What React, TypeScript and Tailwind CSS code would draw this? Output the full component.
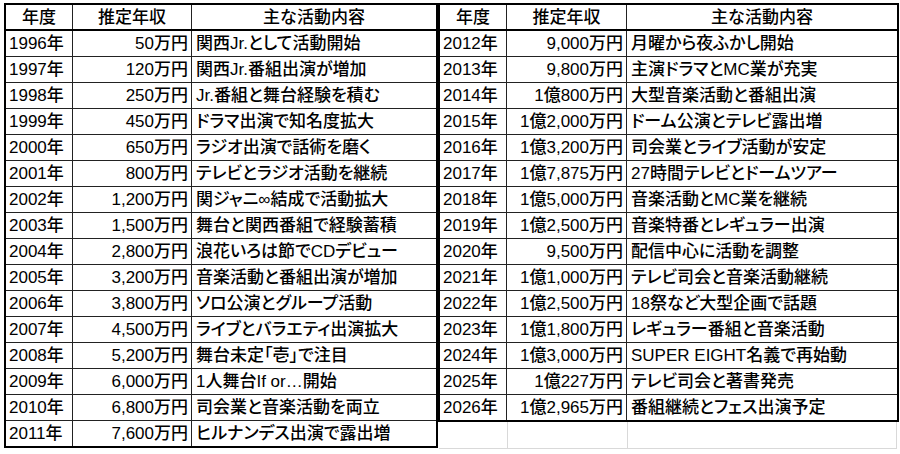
const leftRows: [string, string, string][] = [
  ["1996年", "50万円", "関西Jr.として活動開始"],
  ["1997年", "120万円", "関西Jr.番組出演が増加"],
  ["1998年", "250万円", "Jr.番組と舞台経験を積む"],
  ["1999年", "450万円", "ドラマ出演で知名度拡大"],
  ["2000年", "650万円", "ラジオ出演で話術を磨く"],
  ["2001年", "800万円", "テレビとラジオ活動を継続"],
  ["2002年", "1,200万円", "関ジャニ∞結成で活動拡大"],
  ["2003年", "1,500万円", "舞台と関西番組で経験蓄積"],
  ["2004年", "2,800万円", "浪花いろは節でCDデビュー"],
  ["2005年", "3,200万円", "音楽活動と番組出演が増加"],
  ["2006年", "3,800万円", "ソロ公演とグループ活動"],
  ["2007年", "4,500万円", "ライブとバラエティ出演拡大"],
  ["2008年", "5,200万円", "舞台未定「壱」で注目"],
  ["2009年", "6,000万円", "1人舞台If or…開始"],
  ["2010年", "6,800万円", "司会業と音楽活動を両立"],
  ["2011年", "7,600万円", "ヒルナンデス出演で露出増"],
];

const rightRows: [string, string, string][] = [
  ["2012年", "9,000万円", "月曜から夜ふかし開始"],
  ["2013年", "9,800万円", "主演ドラマとMC業が充実"],
  ["2014年", "1億800万円", "大型音楽活動と番組出演"],
  ["2015年", "1億2,000万円", "ドーム公演とテレビ露出増"],
  ["2016年", "1億3,200万円", "司会業とライブ活動が安定"],
  ["2017年", "1億7,875万円", "27時間テレビとドームツアー"],
  ["2018年", "1億5,000万円", "音楽活動とMC業を継続"],
  ["2019年", "1億2,500万円", "音楽特番とレギュラー出演"],
  ["2020年", "9,500万円", "配信中心に活動を調整"],
  ["2021年", "1億1,000万円", "テレビ司会と音楽活動継続"],
  ["2022年", "1億2,500万円", "18祭など大型企画で話題"],
  ["2023年", "1億1,800万円", "レギュラー番組と音楽活動"],
  ["2024年", "1億3,000万円", "SUPER EIGHT名義で再始動"],
  ["2025年", "1億227万円", "テレビ司会と著書発売"],
  ["2026年", "1億2,965万円", "番組継続とフェス出演予定"],
];

interface IncomeTableProps {
  rows: [string, string, string][];
  cols: string;
  width: string;
}

function IncomeTable({ rows, cols, width }: Readonly<IncomeTableProps>) {
  return (
    <div className={`${width} border-2 border-black`}>
      {/* header */}
      <div className={`grid ${cols} h-[26px] border-b-2 border-black`}>
        <div className="flex items-center justify-center border-r border-[#222]">年度</div>
        <div className="flex items-center justify-center border-r border-[#222]">推定年収</div>
        <div className="flex items-center justify-center">主な活動内容</div>
      </div>
      {rows.map(([year, income, memo], i) => (
        <div
          key={year}
          className={`grid ${cols} ${i === rows.length - 1 ? "h-[25px]" : "h-[26px] border-b border-[#222]"}`}
        >
          <div className="flex items-center border-r border-[#222] pl-[3px]">{year}</div>
          <div className="flex items-center justify-end border-r border-[#222] pr-[3px]">{income}</div>
          <div className="flex items-center pl-[4px] whitespace-nowrap overflow-hidden [font-feature-settings:'palt']">
            {memo}
          </div>
        </div>
      ))}
    </div>
  );
}

export default function App() {
  return (
    <div
      className="w-[900px] h-[454px] bg-white text-black text-[17px] font-medium leading-none overflow-hidden"
      style={{ fontFamily: '"Liberation Sans", "Noto Sans CJK JP", sans-serif' }}
    >
      <div className="flex items-start pt-[3px] pl-[4px]">
        <IncomeTable rows={leftRows} cols="grid-cols-[67px_119px_1fr]" width="w-[434px]" />
        <div className="flex flex-col">
          <IncomeTable rows={rightRows} cols="grid-cols-[67px_120px_1fr]" width="w-[461px]" />
          {/* empty spreadsheet row below */}
          <div className="grid grid-cols-[69px_120px_1fr] h-[27px] border-b border-[#d9d9d9] ml-[1px] mr-[2px]">
            <div className="border-r border-[#d9d9d9]" />
            <div className="border-r border-[#d9d9d9]" />
            <div className="border-r border-[#d9d9d9]" />
          </div>
        </div>
      </div>
    </div>
  );
}
